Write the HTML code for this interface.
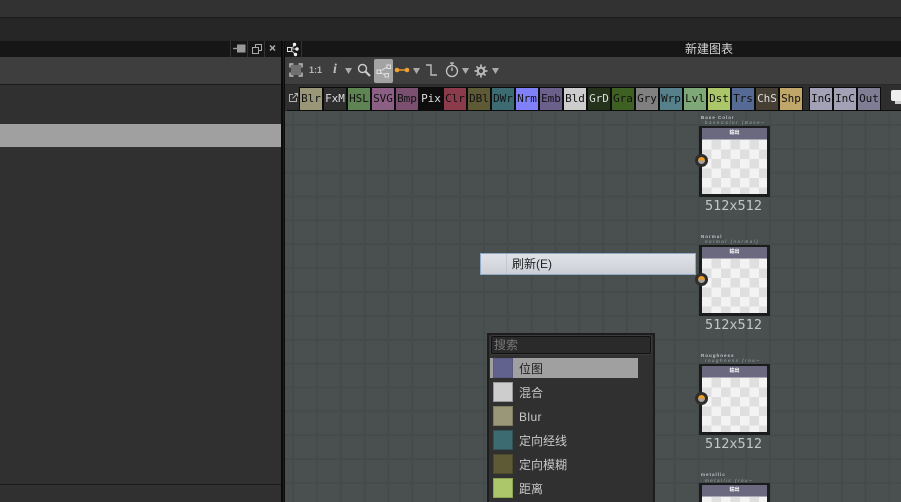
<!DOCTYPE html>
<html><head><meta charset="utf-8"><style>
html,body{margin:0;padding:0;background:#303030;overflow:hidden}
#r{position:relative;width:901px;height:502px;overflow:hidden;background:#303030;font-family:"Liberation Sans","Noto Sans CJK SC",sans-serif}
#r div,#r svg,#r span{position:absolute}
.p{top:87px;width:22px;height:22px;border:1px solid #0c0c0c;font:11px/22px "DejaVu Sans Mono",monospace;text-align:center;color:#111}
.n{left:699px;width:65px;height:66px;border:solid #1b1c1c;border-width:2px 3px 3px 3px;background-color:#f3f3f3;background-image:conic-gradient(#dfdfdf 25%,#f3f3f3 0 50%,#dfdfdf 0 75%,#f3f3f3 0);background-size:19px 19px;background-position:0 12px}
.h{left:0;top:0;width:65px;height:11px;background:#6b697f;border-bottom:1px solid #a9a8b5;color:#fff;font-size:5px;line-height:11px;text-align:center;font-weight:bold}
.s{left:-7px;top:26px;width:7px;height:7px;border-radius:50%;background:linear-gradient(#f09a28 50%,#a5a09a 50%);border:3px solid #2d2d2d}
.d{left:705px;width:57px;color:#c4c6c6;font:13.5px/16px "DejaVu Sans Mono",monospace;white-space:nowrap;text-align:center}
.t1{left:701px;color:#c3c8ce;font:bold 4.5px/5px "Liberation Sans",sans-serif;white-space:nowrap;letter-spacing:1px}
.t2{left:705px;color:#a2a8a8;font:italic 4.5px/5px "Liberation Sans",sans-serif;white-space:nowrap;letter-spacing:1.5px}
.sw{left:493px;width:18px;height:18px;border:1px solid}
.l{left:519px;color:#c8c8c8;font-size:12px;line-height:16px;white-space:nowrap}
</style></head><body><div id="r">
<div style="left:0;top:0;width:901px;height:17px;background:#323232"></div>
<div style="left:0;top:17px;width:901px;height:1px;background:#1b1b1b"></div>
<div style="left:0;top:18px;width:901px;height:23px;background:#262626"></div>
<div style="left:0;top:41px;width:901px;height:16px;background:#161616"></div>
<div style="left:0;top:57px;width:901px;height:27px;background:#3e3e3e"></div>
<div style="left:0;top:84px;width:281px;height:1px;background:#1b1b1b"></div>
<div style="left:0;top:124px;width:281px;height:23px;background:#a0a0a0"></div>
<div style="left:0;top:484px;width:281px;height:1px;background:#1b1b1b"></div>

<!-- tab buttons -->
<div style="left:230px;top:41px;width:1px;height:16px;background:#333"></div>
<div style="left:247px;top:41px;width:1px;height:16px;background:#333"></div>
<div style="left:264px;top:41px;width:1px;height:16px;background:#333"></div>
<div style="left:301px;top:41px;width:1px;height:16px;background:#333"></div>
<svg style="left:232px;top:43px" width="14" height="12"><path d="M1 5.500h5" stroke="#999" stroke-width="1.400"/><rect x="5" y="1.500" width="8.500" height="8" fill="#999"/></svg>
<svg style="left:251px;top:43px" width="12" height="12" fill="none" stroke="#aaa"><rect x="1.500" y="4.500" width="6" height="6"/><path d="M4.500 4V1.500h6v6H8"/></svg>
<svg style="left:268px;top:43px" width="10" height="10" fill="none" stroke="#aaa" stroke-width="1.500"><path d="M2 2.500l5 5M7 2.500l-5 5"/></svg>
<svg style="left:286px;top:42px" width="14" height="15"><rect x="1.500" y="5.500" width="4" height="4" fill="none" stroke="#ddd"/><path d="M5 7L9 3M5 7h5M5 8l4 4" stroke="#bbb"/><circle cx="8.500" cy="2.500" r="1.700" fill="#eee"/><circle cx="11" cy="7" r="1.700" fill="#eee"/><circle cx="9.500" cy="12.500" r="1.700" fill="#eee"/></svg>

<!-- divider -->
<div style="left:281px;top:41px;width:4px;height:461px;background:#0b0b0b"></div>
<div style="left:283px;top:41px;width:1px;height:461px;background:#1d1d1d"></div>

<!-- palette row + canvas -->
<div style="left:285px;top:84px;width:616px;height:1px;background:#2a2a2a"></div>
<div style="left:285px;top:85px;width:616px;height:25px;background:#2e2e2e"></div>
<div style="left:287px;top:110px;width:614px;height:1px;background:#0d0d0d"></div>
<div style="left:285px;top:111px;width:616px;height:391px;background-color:#4a5050;background-image:linear-gradient(90deg,#444b4b 2px,transparent 2px),linear-gradient(#444b4b 2px,transparent 2px);background-size:23.87px 23.87px;background-position:7px 13px"></div>

<!-- toolbar -->
<svg style="left:289px;top:63px" width="14" height="14"><rect x="2" y="2" width="10" height="10" fill="#707070"/><path d="M1 4.500V1h3.500M9.500 1H13v3.500M13 9.500V13H9.500M4.500 13H1V9.500" fill="none" stroke="#bbb" stroke-width="1.500"/></svg>
<span style="left:309px;top:64px;color:#b5b5b5;font:bold 9px/13px 'Liberation Sans',sans-serif">1:1</span>
<span style="left:333px;top:62px;color:#c0c0c0;font:italic bold 14px/16px 'Liberation Serif',serif">i</span>
<svg style="left:345px;top:68px" width="8" height="6"><path d="M0 0h7L3.500 6z" fill="#aaa"/></svg>
<svg style="left:357px;top:63px" width="14" height="14" fill="none" stroke="#ccc"><circle cx="5.500" cy="5.500" r="4" stroke-width="1.400"/><path d="M8.500 8.500L13 13" stroke-width="2.200"/></svg>
<div style="left:374px;top:59px;width:19px;height:24px;background:#a3a3a3;border-radius:2px"></div>
<svg style="left:376px;top:64px" width="16" height="14" fill="none" stroke="#e0e0e0"><rect x="1" y="6" width="3.500" height="3.500"/><rect x="11" y="1" width="3.500" height="3.500"/><rect x="9" y="9.500" width="3.500" height="3.500"/><path d="M4.500 7L11 3M4.500 8.500L9 11"/></svg>
<svg style="left:394px;top:65px" width="17" height="10"><path d="M2 5h13" stroke="#e89a2a" stroke-width="1.500"/><circle cx="3" cy="5" r="2.300" fill="#f0a030"/><circle cx="13" cy="5" r="2.300" fill="#f0a030"/></svg>
<svg style="left:413px;top:68px" width="8" height="6"><path d="M0 0h7L3.500 6z" fill="#aaa"/></svg>
<svg style="left:426px;top:64px" width="13" height="13" fill="none" stroke="#bbb" stroke-width="1.400"><path d="M0 1h5v10h6"/></svg>
<svg style="left:445px;top:62px" width="15" height="16" fill="none" stroke="#c4c4c4" stroke-width="1.300"><circle cx="7" cy="9" r="5.500"/><path d="M7 9V5.500M5 1h4M7 1v2"/></svg>
<svg style="left:462px;top:68px" width="8" height="6"><path d="M0 0h7L3.500 6z" fill="#aaa"/></svg>
<svg style="left:474px;top:64px" width="14" height="14" fill="none" stroke="#b8b8b8"><circle cx="7" cy="7" r="3.200" stroke-width="2.200"/><path d="M7 0.500v2.500M7 11v2.500M0.500 7H3M11 7h2.500M2.500 2.500l1.800 1.800M9.700 9.700l1.800 1.800M2.500 11.500l1.800-1.800M9.700 4.300l1.800-1.800" stroke-width="1.800"/></svg>
<svg style="left:492px;top:68px" width="8" height="6"><path d="M0 0h7L3.500 6z" fill="#aaa"/></svg>

<span style="left:685px;top:42px;color:#d4d4d4;font-size:12px;line-height:15px;white-space:nowrap">新建图表</span>

<!-- palette -->
<svg style="left:288px;top:92px" width="11" height="11" fill="none" stroke="#b0b0b0"><path d="M8.500 6v3.500h-7v-7H5"/><path d="M4.500 6.500L9.500 1.500M6.500 1.500h3v3"/></svg>
<div class="p" style="left:299px;background:#9a9678">Blr</div>
<div class="p" style="left:323px;background:#2e2e2e;color:#ddd">FxM</div>
<div class="p" style="left:347px;background:#5f8453">HSL</div>
<div class="p" style="left:371px;background:#8c5f84">SVG</div>
<div class="p" style="left:395px;background:#7a4f70">Bmp</div>
<div class="p" style="left:419px;background:#0d0d0d;color:#ddd">Pix</div>
<div class="p" style="left:443px;background:#8c3b4a">Clr</div>
<div class="p" style="left:467px;background:#5f5a36">DBl</div>
<div class="p" style="left:491px;background:#3c6c72">DWr</div>
<div class="p" style="left:515px;background:#8080f8">Nrm</div>
<div class="p" style="left:539px;background:#6b5f8c">Emb</div>
<div class="p" style="left:563px;background:#cdcdcd">Bld</div>
<div class="p" style="left:587px;background:#25331c;color:#ddd">GrD</div>
<div class="p" style="left:611px;background:#3e6023">Gra</div>
<div class="p" style="left:635px;background:#808080">Gry</div>
<div class="p" style="left:659px;background:#56808a">Wrp</div>
<div class="p" style="left:683px;background:#7fa878">Lvl</div>
<div class="p" style="left:707px;background:#abc76a">Dst</div>
<div class="p" style="left:731px;background:#566a96">Trs</div>
<div class="p" style="left:755px;background:#463f33;color:#ddd">ChS</div>
<div class="p" style="left:779px;background:#c0a668">Shp</div>
<div class="p" style="left:809px;background:#a3a1b6">InG</div>
<div class="p" style="left:833px;background:#a3a1b6">InC</div>
<div class="p" style="left:857px;background:#7f7d95">Out</div>
<div style="left:891px;top:90px;width:10px;height:11px;background:#eee;border-radius:2px 0 0 2px"></div>
<div style="left:895px;top:101px;width:6px;height:3px;background:#ccc"></div>

<!-- nodes -->
<span class="t1" style="top:115px">Base Color</span><span class="t2" style="top:120px">baseColor (Base~</span>
<div class="n" style="top:126px"><div class="h">输出</div><div class="s"></div></div>
<span class="d" style="top:198px">512x512</span>
<span class="t1" style="top:234px">Normal</span><span class="t2" style="top:239px">normal (normal)</span>
<div class="n" style="top:245px"><div class="h">输出</div><div class="s"></div></div>
<span class="d" style="top:317px">512x512</span>
<span class="t1" style="top:353px">Roughness</span><span class="t2" style="top:358px">roughness (rou~</span>
<div class="n" style="top:364px"><div class="h">输出</div><div class="s"></div></div>
<span class="d" style="top:436px">512x512</span>
<span class="t1" style="top:472px">metallic</span><span class="t2" style="top:478px">metallic (rou~</span>
<div class="n" style="top:483px;height:17px;border-bottom:0"><div class="h">输出</div></div>

<!-- context item -->
<div style="left:480px;top:253px;width:214px;height:20px;border:1px solid #8fa9c6;background:linear-gradient(#dfe2e7,#ccd0d6)"></div>
<div style="left:506px;top:254px;width:1px;height:20px;background:#c4c8ce"></div>
<span style="left:512px;top:257px;color:#222;font-size:12px;line-height:15px;white-space:nowrap">刷新(E)</span>

<!-- search popup -->
<div style="left:487px;top:333px;width:164px;height:169px;border:2px solid #1d1d1d;border-bottom:0;background:#303030"></div>
<div style="left:491px;top:336px;width:158px;height:16px;border:1px solid #111;border-radius:2px;background:#2a2a2a;box-shadow:0 0 0 1px #3a3a3a"></div>
<span style="left:494px;top:337px;color:#777;font-size:12px;line-height:16px">搜索</span>
<div style="left:490px;top:358px;width:148px;height:20px;background:#a0a0a0"></div>
<div class="sw" style="top:358px;background:#62628f;border-color:#5a5a80"></div>
<span class="l" style="top:361px;color:#222">位图</span>
<div class="sw" style="top:382px;background:#cdcdcd;border-color:#999"></div>
<span class="l" style="top:385px">混合</span>
<div class="sw" style="top:406px;background:#9a9678;border-color:#807c62"></div>
<span class="l" style="top:409px;letter-spacing:.4px">Blur</span>
<div class="sw" style="top:430px;background:#3c6c72;border-color:#2e5458"></div>
<span class="l" style="top:433px">定向经线</span>
<div class="sw" style="top:454px;background:#5f5a36;border-color:#4c482c"></div>
<span class="l" style="top:457px">定向模糊</span>
<div class="sw" style="top:478px;background:#abc76a;border-color:#8ea554"></div>
<span class="l" style="top:481px">距离</span>
</div></body></html>
